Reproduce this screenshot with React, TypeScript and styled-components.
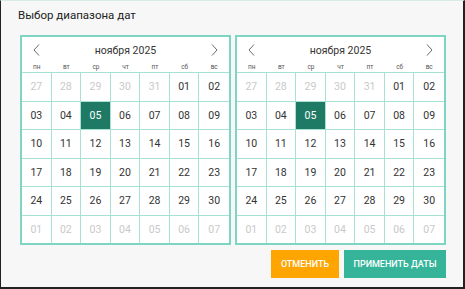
import React from "react";
import { styled, createGlobalStyle } from "styled-components";

const GlobalStyle = createGlobalStyle`
  html, body {
    margin: 0;
    padding: 0;
    background: #f7f7f7;
  }
  * {
    box-sizing: border-box;
  }
`;

interface IDay {
  label: string;
  muted?: boolean;
  selected?: boolean;
}

const WEEKDAYS = ["пн", "вт", "ср", "чт", "пт", "сб", "вс"];

// Ноябрь 2025: начинается с субботы, хвост из декабря
function buildDays(): IDay[] {
  const days: IDay[] = [];
  [27, 28, 29, 30, 31].forEach((d) => days.push({ label: String(d), muted: true }));
  for (let d = 1; d <= 30; d++) {
    days.push({ label: String(d).padStart(2, "0"), selected: d === 5 });
  }
  for (let d = 1; d <= 7; d++) {
    days.push({ label: String(d).padStart(2, "0"), muted: true });
  }
  return days;
}

function Chevron({ dir }: { dir: "left" | "right" }) {
  return (
    <svg width="7" height="12" viewBox="0 0 7 12">
      <polyline
        points={dir === "left" ? "6,0.5 1,6 6,11.5" : "1,0.5 6,6 1,11.5"}
        fill="none"
        stroke="#6b6b6b"
        strokeWidth="1"
      />
    </svg>
  );
}

function Calendar() {
  const days = buildDays();
  return (
    <Cal>
      <CalHead>
        <NavBtn>
          <Chevron dir="left" />
        </NavBtn>
        <Month>ноября 2025</Month>
        <NavBtn>
          <Chevron dir="right" />
        </NavBtn>
      </CalHead>
      <Weekdays>
        {WEEKDAYS.map((w) => (
          <Weekday key={w}>{w}</Weekday>
        ))}
      </Weekdays>
      <Grid>
        {days.map((d, i) => (
          <Cell key={i} $muted={d.muted} $selected={d.selected} $last={i % 7 === 6}>
            {d.label}
          </Cell>
        ))}
      </Grid>
    </Cal>
  );
}

export default function App() {
  return (
    <>
      <GlobalStyle />
      <Frame>
        <Title>Выбор диапазона дат</Title>
        <Calendars>
          <Calendar />
          <Calendar />
        </Calendars>
        <Actions>
          <CancelBtn>Отменить</CancelBtn>
          <ApplyBtn>Применить даты</ApplyBtn>
        </Actions>
      </Frame>
    </>
  );
}

const Frame = styled.div`
  width: 465px;
  height: 289px;
  background: #f7f7f7;
  border-top: 1px solid #d9ebe5;
  border-left: 1px solid #222;
  border-right: 2px solid #222;
  border-bottom: 2px solid #222;
  font-family: Roboto, "Liberation Sans", sans-serif;
  display: flex;
  flex-direction: column;
  align-items: flex-start;
`;

const Title = styled.div`
  margin: 8px 0 0 17px;
  font-size: 11.5px;
  line-height: 13px;
  color: #222;
`;

const Calendars = styled.div`
  display: flex;
  gap: 4px;
  margin: 13px 0 0 19px;
`;

const Cal = styled.div`
  width: 211px;
  height: 210px;
  border: 2px solid #7fd5c3;
  background: #fff;
  display: flex;
  flex-direction: column;
`;

const CalHead = styled.div`
  height: 26px;
  display: flex;
  align-items: center;
  justify-content: space-between;
  padding: 0 11px;
`;

const NavBtn = styled.span`
  display: flex;
  align-items: center;
`;

const Month = styled.span`
  font-size: 10.5px;
  color: #333;
`;

const Weekdays = styled.div`
  height: 9px;
  display: grid;
  grid-template-columns: repeat(7, 1fr);
`;

const Weekday = styled.span`
  font-size: 6.5px;
  line-height: 9px;
  text-align: center;
  color: #555;
`;

const Grid = styled.div`
  flex: 1;
  display: grid;
  grid-template-columns: repeat(7, 1fr);
  grid-auto-rows: 1fr;
`;

const Cell = styled.div<{ $muted?: boolean; $selected?: boolean; $last?: boolean }>`
  display: flex;
  align-items: center;
  justify-content: center;
  font-size: 10.5px;
  border-top: 1px solid #a6e1d3;
  border-right: ${(p) => (p.$last ? "none" : "1px solid #a6e1d3")};
  color: ${(p) => (p.$selected ? "#fff" : p.$muted ? "#c9c9c9" : "#333")};
  background: ${(p) => (p.$selected ? "#1f7a65" : "transparent")};
`;

const Actions = styled.div`
  align-self: stretch;
  display: flex;
  justify-content: flex-end;
  gap: 5px;
  margin-top: 5px;
  padding-right: 17px;

  & button {
    height: 28px;
    border: none;
    color: #fff;
    font-family: Roboto, "Liberation Sans", sans-serif;
    font-size: 9px;
    font-weight: 500;
    text-transform: uppercase;
    padding: 0;
    cursor: pointer;
  }
`;

const CancelBtn = styled.button`
  width: 68px;
  background: #ffa500;
`;

const ApplyBtn = styled.button`
  width: 102px;
  background: #35b49a;
`;
